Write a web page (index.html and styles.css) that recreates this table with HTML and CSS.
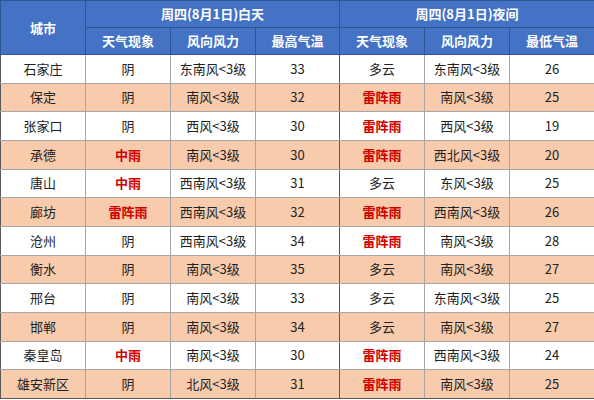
FILE: index.html
```html
<!DOCTYPE html>
<html lang="zh">
<head>
<meta charset="utf-8">
<link rel="stylesheet" href="styles.css">
</head>
<body>
<table class="wx">
  <colgroup>
    <col class="c85"><col class="c85"><col class="c85"><col class="c84"><col class="c85"><col class="c85"><col class="c85">
  </colgroup>
  <thead>
    <tr class="h1">
      <th rowspan="2">城市</th>
      <th colspan="3" class="grp">周四(8月1日)白天</th>
      <th colspan="3">周四(8月1日)夜间</th>
    </tr>
    <tr class="h2">
      <th>天气现象</th><th>风向风力</th><th class="grp">最高气温</th>
      <th>天气现象</th><th>风向风力</th><th>最低气温</th>
    </tr>
  </thead>
  <tbody>
    <tr><td>石家庄</td><td>阴</td><td>东南风&lt;3级</td><td class="grp">33</td><td>多云</td><td>东南风&lt;3级</td><td>26</td></tr>
    <tr class="alt"><td>保定</td><td>阴</td><td>南风&lt;3级</td><td class="grp">32</td><td class="red">雷阵雨</td><td>南风&lt;3级</td><td>25</td></tr>
    <tr><td>张家口</td><td>阴</td><td>西风&lt;3级</td><td class="grp">30</td><td class="red">雷阵雨</td><td>西风&lt;3级</td><td>19</td></tr>
    <tr class="alt"><td>承德</td><td class="red">中雨</td><td>南风&lt;3级</td><td class="grp">30</td><td class="red">雷阵雨</td><td>西北风&lt;3级</td><td>20</td></tr>
    <tr><td>唐山</td><td class="red">中雨</td><td>西南风&lt;3级</td><td class="grp">31</td><td>多云</td><td>东风&lt;3级</td><td>25</td></tr>
    <tr class="alt"><td>廊坊</td><td class="red">雷阵雨</td><td>西南风&lt;3级</td><td class="grp">32</td><td class="red">雷阵雨</td><td>西南风&lt;3级</td><td>26</td></tr>
    <tr><td>沧州</td><td>阴</td><td>西南风&lt;3级</td><td class="grp">34</td><td class="red">雷阵雨</td><td>南风&lt;3级</td><td>28</td></tr>
    <tr class="alt"><td>衡水</td><td>阴</td><td>南风&lt;3级</td><td class="grp">35</td><td>多云</td><td>南风&lt;3级</td><td>27</td></tr>
    <tr><td>邢台</td><td>阴</td><td>南风&lt;3级</td><td class="grp">33</td><td>多云</td><td>东南风&lt;3级</td><td>25</td></tr>
    <tr class="alt"><td>邯郸</td><td>阴</td><td>南风&lt;3级</td><td class="grp">34</td><td>多云</td><td>南风&lt;3级</td><td>27</td></tr>
    <tr><td>秦皇岛</td><td class="red">中雨</td><td>南风&lt;3级</td><td class="grp">30</td><td class="red">雷阵雨</td><td>西南风&lt;3级</td><td>24</td></tr>
    <tr class="alt"><td>雄安新区</td><td>阴</td><td>北风&lt;3级</td><td class="grp">31</td><td class="red">雷阵雨</td><td>南风&lt;3级</td><td>25</td></tr>
  </tbody>
</table>
</body>
</html>
```
FILE: styles.css
```css
html, body {
  margin: 0;
  padding: 0;
  background: #ffffff;
}
.wx {
  width: 594px;
  height: 399px;
  border-collapse: collapse;
  table-layout: fixed;
  font-family: "Noto Sans CJK SC", "Noto Sans", sans-serif;
  font-size: 13px;
  line-height: 16px;
  color: #222222;
}
.c85 { width: 85px; }
.c84 { width: 84px; }
.wx th {
  background: #4472c4;
  color: #ffffff;
  font-weight: bold;
  border: 1px solid #2f5597;
  height: 26px;
  padding: 0;
  text-align: center;
  vertical-align: middle;
}
.wx td {
  border: 1px solid #a6a6a6;
  height: 26px;
  padding: 0;
  text-align: center;
  vertical-align: middle;
  background: #ffffff;
}
.wx tbody tr {
  border-top: 1px solid #7f7f7f;
}
.wx tbody tr.alt td {
  background: #f8cbad;
}
.wx td:first-child {
  border-left: 1px solid #595959;
}
.wx td:last-child {
  border-right: 1px solid #595959;
}
.wx tbody tr:last-child td {
  border-bottom: 1px solid #595959;
}
.wx td.grp {
  border-right: 1px solid #595959;
}
.wx td.red {
  color: #d00000;
  font-weight: bold;
}
```
